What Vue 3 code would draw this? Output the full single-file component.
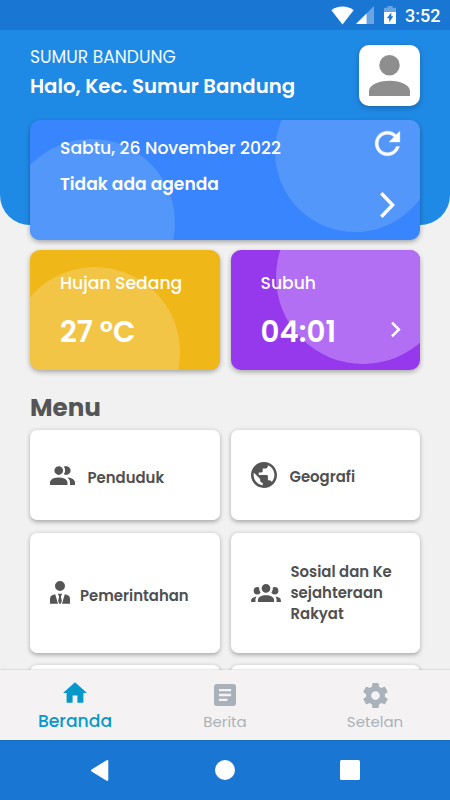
<template>
  <div class="screen">
    <div class="status-bar">
      <svg class="wifi" viewBox="0 0 23 19">
        <path d="M11.5 18.5 L0.4 4.2 Q5 0.5 11.5 0.5 Q18 0.5 22.6 4.2 Z" />
      </svg>
      <svg class="signal" viewBox="0 0 18 18">
        <path d="M0 18 L18 0 V18 Z" opacity="0.35" />
        <path d="M0 18 L10.5 7.5 V18 Z" />
      </svg>
      <svg class="battery" viewBox="0 0 12 18">
        <path d="M0.8 1.8 H3.5 V0 H8.5 V1.8 H11.2 Q12 1.8 12 2.6 V6.5 H0 V2.6 Q0 1.8 0.8 1.8 Z" opacity="0.35" />
        <path fill-rule="evenodd" d="M0 6 H12 V17.2 Q12 18 11.2 18 H0.8 Q0 18 0 17.2 Z M7.3 6.6 L2.8 12.2 H5.2 V16.3 L9.3 10.3 H7.3 Z" />
      </svg>
      <span class="clock">3:52</span>
    </div>

    <div class="content">
      <div class="header-bg"></div>
      <div class="header">
        <div>
          <div class="region">SUMUR BANDUNG</div>
          <div class="hello">Halo, Kec. Sumur Bandung</div>
        </div>
        <div class="avatar">
          <svg viewBox="4 4 16 16"><path :d="icons.account" /></svg>
        </div>
      </div>

      <div class="card agenda">
        <i class="bubble agenda-left"></i>
        <i class="bubble agenda-right"></i>
        <div class="card-text">
          <div class="label">Sabtu, 26 November 2022</div>
          <div class="agenda-title">Tidak ada agenda</div>
        </div>
        <div class="agenda-actions">
          <svg class="refresh" viewBox="0 0 24 24"><path :d="icons.refresh" /></svg>
          <svg class="arrow" viewBox="0 0 15 26"><path d="M1.3 1.3 L12.6 13 L1.3 24.7" /></svg>
        </div>
      </div>

      <div class="row">
        <div class="card small weather">
          <i class="bubble weather-bubble"></i>
          <div class="card-text">
            <div class="label">Hujan Sedang</div>
            <div class="value">27 ºC</div>
          </div>
        </div>
        <div class="card small pray">
          <i class="bubble pray-bubble"></i>
          <div class="card-text">
            <div class="label">Subuh</div>
            <div class="value">04:01</div>
          </div>
          <svg class="chevron" viewBox="0 0 24 24"><path :d="icons.chevron" /></svg>
        </div>
      </div>

      <h2>Menu</h2>
      <div class="menu">
        <div v-for="item in menus" :key="item.name" class="menu-item" :class="item.name">
          <svg :viewBox="item.box"><path :d="item.icon" /></svg>
          <div>
            <div v-for="line in item.lines" :key="line" class="line">{{ line }}</div>
          </div>
        </div>
        <div class="menu-item"></div>
        <div class="menu-item"></div>
      </div>
    </div>

    <div class="tabs">
      <div v-for="tab in tabs" :key="tab.name" class="tab" :class="[tab.name, { active: tab.name === state.active }]">
        <svg :viewBox="tab.box"><path :d="tab.icon" /></svg>
        <span>{{ tab.label }}</span>
      </div>
    </div>

    <div class="nav-bar">
      <div><svg class="back" viewBox="0 0 18 21"><path d="M16.2 1.2 V19.8 L1.2 10.5 Z" /></svg></div>
      <div><i class="home-btn"></i></div>
      <div><i class="recent"></i></div>
    </div>
  </div>
</template>
<script setup>
import { reactive } from 'vue';

const state = reactive({
  active: 'beranda',
});

const icons = {
  account: 'M12,4A4,4 0 0,1 16,8A4,4 0 0,1 12,12A4,4 0 0,1 8,8A4,4 0 0,1 12,4M12,14C16.42,14 20,15.79 20,18V20H4V18C4,15.79 7.58,14 12,14Z',
  refresh: 'M17.65 6.35C16.2 4.9 14.21 4 12 4c-4.42 0-7.99 3.58-7.99 8s3.57 8 7.99 8c3.73 0 6.84-2.55 7.73-6h-2.08c-.82 2.33-3.04 4-5.65 4-3.31 0-6-2.69-6-6s2.69-6 6-6c1.66 0 3.14.69 4.22 1.78L13 11h7V4l-2.35 2.35z',
  chevron: 'M8.59,16.58L13.17,12L8.59,7.41L10,6L16,12L10,18L8.59,16.58Z',
};

const menus = [
  {
    name: 'penduduk',
    lines: ['Penduduk'],
    box: '2 4 20 15',
    icon: 'M16 17V19H2V17S2 13 9 13 16 17 16 17M12.5 7.5A3.5 3.5 0 1 0 9 11A3.5 3.5 0 0 0 12.5 7.5M15.94 13A5.32 5.32 0 0 1 18 17V19H22V17S22 13.37 15.94 13M15 4A3.39 3.39 0 0 0 13.07 4.59A5 5 0 0 1 13.07 10.41A3.39 3.39 0 0 0 15 11A3.5 3.5 0 0 0 15 4Z',
  },
  {
    name: 'geografi',
    lines: ['Geografi'],
    box: '2 2 20 20',
    icon: 'M12 2C6.48 2 2 6.48 2 12s4.48 10 10 10 10-4.48 10-10S17.52 2 12 2zm-1 17.93c-3.95-.49-7-3.85-7-7.93 0-.62.08-1.21.21-1.79L9 15v1c0 1.1.9 2 2 2v1.93zm6.9-2.54c-.26-.81-1-1.39-1.9-1.39h-1v-3c0-.55-.45-1-1-1H8v-2h2c.55 0 1-.45 1-1V7h2c1.1 0 2-.9 2-2v-.41c2.93 1.19 5 4.06 5 7.41 0 2.08-.8 3.97-2.1 5.39z',
  },
  {
    name: 'pemerintahan',
    lines: ['Pemerintahan'],
    box: '0 0 20 23',
    icon: 'M10 0A5 5 0 0 1 10 10A5 5 0 0 1 10 0ZM0 22.8V17.5Q0 14.6 2.6 13.9L5.2 13.2L8 22.8ZM20 22.8V17.5Q20 14.6 17.4 13.9L14.8 13.2L12 22.8ZM7.8 12.8H12.2L10.9 15.4L11.8 20L10.8 22.8H9.2L8.2 20L9.1 15.4Z',
  },
  {
    name: 'sosial',
    lines: ['Sosial dan Ke', 'sejahteraan', 'Rakyat'],
    box: '0 5.5 24 14.5',
    icon: 'M12,5.5A3.5,3.5 0 0,1 15.5,9A3.5,3.5 0 0,1 12,12.5A3.5,3.5 0 0,1 8.5,9A3.5,3.5 0 0,1 12,5.5M5,8C5.56,8 6.08,8.15 6.53,8.42C6.38,9.85 6.8,11.27 7.66,12.38C7.16,13.34 6.16,14 5,14A3,3 0 0,1 2,11A3,3 0 0,1 5,8M19,8A3,3 0 0,1 22,11A3,3 0 0,1 19,14C17.84,14 16.84,13.34 16.34,12.38C17.2,11.27 17.62,9.85 17.47,8.42C17.92,8.15 18.44,8 19,8M5.5,18.25C5.5,16.18 8.41,14.5 12,14.5C15.59,14.5 18.5,16.18 18.5,18.25V20H5.5V18.25M0,20V18.5C0,17.11 1.89,15.94 4.45,15.6C3.86,16.28 3.5,17.22 3.5,18.25V20H0M24,20H20.5V18.25C20.5,17.22 20.14,16.28 19.55,15.6C22.11,15.94 24,17.11 24,18.5V20Z',
  },
];

const tabs = [
  {
    name: 'beranda',
    label: 'Beranda',
    box: '2 3 20 17',
    icon: 'M10,20V14H14V20H19V12H22L12,3L2,12H5V20H10Z',
  },
  {
    name: 'berita',
    label: 'Berita',
    box: '3 3 18 18',
    icon: 'M19 3H5c-1.1 0-2 .9-2 2v14c0 1.1.9 2 2 2h14c1.1 0 2-.9 2-2V5c0-1.1-.9-2-2-2zm-5 14H7v-2h7v2zm3-4H7v-2h10v2zm0-4H7V7h10v2z',
  },
  {
    name: 'setelan',
    label: 'Setelan',
    box: '2 2 20 20',
    icon: 'M12,15.5A3.5,3.5 0 0,1 8.5,12A3.5,3.5 0 0,1 12,8.5A3.5,3.5 0 0,1 15.5,12A3.5,3.5 0 0,1 12,15.5M19.43,12.97C19.47,12.65 19.5,12.33 19.5,12C19.5,11.67 19.47,11.34 19.43,11L21.54,9.37C21.73,9.22 21.78,8.95 21.66,8.73L19.66,5.27C19.54,5.05 19.27,4.96 19.05,5.05L16.56,6.05C16.04,5.66 15.5,5.32 14.87,5.07L14.5,2.42C14.46,2.18 14.25,2 14,2H10C9.75,2 9.54,2.18 9.5,2.42L9.13,5.07C8.5,5.32 7.96,5.66 7.44,6.05L4.95,5.05C4.73,4.96 4.46,5.05 4.34,5.27L2.34,8.73C2.21,8.95 2.27,9.22 2.46,9.37L4.57,11C4.53,11.34 4.5,11.67 4.5,12C4.5,12.33 4.53,12.65 4.57,12.97L2.46,14.63C2.27,14.78 2.21,15.05 2.34,15.27L4.34,18.73C4.46,18.95 4.73,19.03 4.95,18.95L7.44,17.94C7.96,18.34 8.5,18.68 9.13,18.93L9.5,21.58C9.54,21.82 9.75,22 10,22H14C14.25,22 14.46,21.82 14.5,21.58L14.87,18.93C15.5,18.67 16.04,18.34 16.56,17.94L19.05,18.95C19.27,19.03 19.54,18.95 19.66,18.73L21.66,15.27C21.78,15.05 21.73,14.78 21.54,14.63L19.43,12.97Z',
  },
];
</script>
<style scoped>
  .screen {
    width: 450px;
    height: 800px;
    display: flex;
    flex-direction: column;
    overflow: hidden;
    background-color: #f1f1f1;
    font-family: Poppins, Inter, "Open Sans", sans-serif;
    white-space: nowrap;
  }
  svg {
    display: block;
    fill: currentColor;
    flex: none;
  }
  .status-bar {
    height: 30px;
    flex: none;
    box-sizing: border-box;
    padding: 0 10px 0 331px;
    display: flex;
    align-items: center;
    background-color: #1976d3;
    color: #fff;
  }
  .wifi {
    width: 23px;
    height: 19px;
  }
  .signal {
    width: 18px;
    height: 18px;
    margin-left: 2px;
  }
  .battery {
    width: 12px;
    height: 18px;
    margin-left: 10px;
  }
  .clock {
    margin-left: 9px;
    font-family: Roboto, sans-serif;
    font-size: 18px;
    font-weight: 500;
    line-height: 30px;
    padding-top: 1px;
  }
  .content {
    position: relative;
    height: 640px;
    flex: none;
    box-sizing: border-box;
    padding: 0 30px;
    overflow: hidden;
  }
  .header-bg {
    position: absolute;
    left: 0;
    top: 0;
    width: 100%;
    height: 195px;
    border-radius: 0 0 30px 30px;
    background-color: #1f8ae6;
  }
  .header {
    position: relative;
    height: 90px;
    box-sizing: border-box;
    padding-top: 15px;
    display: flex;
    justify-content: space-between;
    align-items: flex-start;
    color: #f4faff;
  }
  .region {
    font-size: 17.1px;
    line-height: 24px;
  }
  .hello {
    margin-top: 2px;
    font-size: 19.7px;
    font-weight: 600;
    line-height: 30px;
    color: #fff;
  }
  .avatar {
    width: 61px;
    height: 61px;
    display: flex;
    align-items: center;
    justify-content: center;
    border-radius: 10px;
    background-color: #fff;
    color: #8e8e8e;
    box-shadow: 0 2px 6px rgba(0, 0, 0, 0.25);
  }
  .avatar svg {
    width: 41px;
    height: 41px;
  }
  .card {
    position: relative;
    height: 120px;
    box-sizing: border-box;
    display: flex;
    justify-content: space-between;
    overflow: hidden;
    border-radius: 10px;
    color: #fff;
    box-shadow: 0 2px 5px rgba(0, 0, 0, 0.32);
  }
  .card-text {
    position: relative;
    padding-left: 30px;
  }
  .bubble {
    position: absolute;
    border-radius: 50%;
  }
  .agenda {
    background-color: #3985fd;
  }
  .agenda .card-text {
    padding-top: 16px;
  }
  .agenda .bubble {
    background-color: #5397fb;
  }
  .agenda-left {
    left: -23px;
    top: 19px;
    width: 168px;
    height: 168px;
  }
  .agenda-right {
    left: 245px;
    top: -48px;
    width: 160px;
    height: 160px;
  }
  .label {
    font-size: 17.2px;
    font-weight: 500;
    line-height: 24px;
  }
  .agenda-title {
    margin-top: 12px;
    font-size: 17.1px;
    font-weight: 600;
    line-height: 24px;
  }
  .agenda-actions {
    position: relative;
    display: flex;
    flex-direction: column;
    align-items: center;
    padding: 5px 14px 0 0;
  }
  .refresh {
    width: 37px;
    height: 37px;
    stroke: #fff;
    stroke-width: 0.25;
  }
  .arrow {
    width: 15px;
    height: 26px;
    margin-top: 30px;
    fill: none;
    stroke: #fff;
    stroke-width: 3.4;
  }
  .row {
    display: grid;
    grid-template-columns: 1fr 1fr;
    gap: 11px;
    margin-top: 10px;
  }
  .small .card-text {
    padding-top: 20.5px;
  }
  .value {
    margin-top: 17px;
    font-size: 29.3px;
    font-weight: 600;
    line-height: 40px;
  }
  .weather {
    background-color: #f0b718;
  }
  .weather-bubble {
    left: -20px;
    top: 17px;
    width: 170px;
    height: 170px;
    background-color: #f3c546;
  }
  .pray {
    background-color: #9638ec;
  }
  .pray-bubble {
    left: 45px;
    top: -60px;
    width: 174px;
    height: 174px;
    background-color: #b26ff4;
  }
  .chevron {
    position: relative;
    width: 31px;
    height: 31px;
    margin: 64px 9px 0 0;
  }
  h2 {
    margin: 20px 0 4px;
    font-size: 24.6px;
    font-weight: 700;
    line-height: 36px;
    color: #555;
  }
  .menu {
    display: grid;
    grid-template-columns: 1fr 1fr;
    grid-template-rows: 90px 120px 90px;
    gap: 12.5px 11px;
  }
  .menu-item {
    display: flex;
    align-items: center;
    box-sizing: border-box;
    padding-left: 20px;
    border-radius: 7px;
    background-color: #fff;
    color: #555;
    box-shadow: 0 1.5px 4px rgba(0, 0, 0, 0.3);
  }
  .line {
    font-size: 14.9px;
    font-weight: 600;
    line-height: 21px;
    color: #505050;
  }
  .penduduk svg {
    width: 25px;
    height: 19px;
  }
  .penduduk .line {
    margin: 5px 0 0 12.5px;
  }
  .geografi svg {
    width: 26px;
    height: 26px;
  }
  .geografi .line {
    margin: 3px 0 0 13px;
  }
  .pemerintahan svg {
    width: 20px;
    height: 23px;
  }
  .pemerintahan .line {
    margin: 5px 0 0 10px;
  }
  .sosial svg {
    width: 30px;
    height: 18px;
  }
  .sosial .line {
    margin-left: 10px;
  }
  .tabs {
    position: relative;
    height: 70px;
    flex: none;
    display: grid;
    grid-template-columns: repeat(3, 1fr);
    background-color: #f4f2f3;
    box-shadow: 0 0 2px rgba(0, 0, 0, 0.25);
  }
  .tab {
    display: flex;
    flex-direction: column;
    align-items: center;
    justify-content: flex-end;
    box-sizing: border-box;
    padding-bottom: 6px;
    color: #a9b2ba;
  }
  .tab span {
    font-size: 15px;
    line-height: 24px;
  }
  .tab.active {
    padding-bottom: 7px;
    color: #0798cb;
  }
  .tab.active span {
    font-size: 17.2px;
    font-weight: 500;
  }
  .beranda svg {
    width: 24px;
    height: 21px;
    margin-bottom: 6px;
  }
  .berita svg {
    width: 22px;
    height: 22px;
    margin-bottom: 4px;
  }
  .setelan svg {
    width: 25px;
    height: 25px;
    margin-bottom: 2px;
  }
  .nav-bar {
    height: 60px;
    flex: none;
    box-sizing: border-box;
    padding: 0 37.5px;
    display: grid;
    grid-template-columns: repeat(3, 1fr);
    background-color: #1976d3;
    color: #fff;
  }
  .nav-bar div {
    display: flex;
    align-items: center;
    justify-content: center;
  }
  .back {
    width: 18px;
    height: 21px;
    stroke: #fff;
    stroke-width: 2.2;
    stroke-linejoin: round;
  }
  .home-btn {
    width: 20px;
    height: 20px;
    border-radius: 50%;
    background-color: #fff;
  }
  .recent {
    width: 20px;
    height: 20px;
    border-radius: 1.5px;
    background-color: #fff;
  }
</style>
<style>
  body {
    margin: 0;
  }
</style>
